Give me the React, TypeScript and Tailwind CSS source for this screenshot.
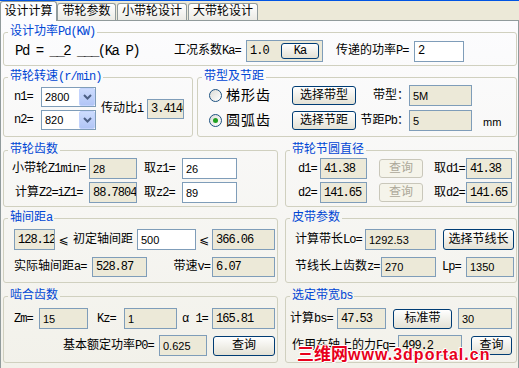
import type { ReactNode } from 'react';

const F = "font-['Liberation_Mono','Noto_Sans_CJK_SC',monospace]";
const SANS = "font-['Liberation_Sans','Noto_Sans_CJK_SC',sans-serif] text-[11px]";
const MONO = "font-['Liberation_Mono',monospace] text-[12px] tracking-[-1px]";

// SimSun draws latin half-width (6px); tighten the mono runs so labels keep their width
function T({ s }: { s: string }) {
  return (
    <>
      {s.split(/([\x20-\x7e]+)/).map((part, i) =>
        /^[\x20-\x7e]+$/.test(part) ? (
          <span key={i} className="tracking-[-1px]">
            {part}
          </span>
        ) : (
          part
        )
      )}
    </>
  );
}

function Group({ title, w, children }: { title: string; w: string; children: ReactNode }) {
  return (
    <fieldset className={`${w} shrink-0 min-w-0 rounded-[3px] border border-[#d0d0bf]`}>
      <legend className="ml-[4px] px-[2px] leading-[14px] text-[#0046d5]">
        <T s={title} />
      </legend>
      {children}
    </fieldset>
  );
}

function Box({ w, v, white, mono, h = 'h-[21px]' }: { w: string; v: string; white?: boolean; mono?: boolean; h?: string }) {
  return (
    <div
      className={`${w} ${h} shrink-0 flex items-center overflow-hidden whitespace-nowrap border border-[#7f9db9] pl-[3px] text-black ${
        white ? 'bg-white' : 'bg-[#ece9d8]'
      } ${mono ? MONO : SANS}`}
    >
      {v}
    </div>
  );
}

function Label({ w, s, className = '' }: { w: string; s: string; className?: string }) {
  return (
    <span className={`${w} shrink-0 whitespace-nowrap ${className}`}>
      <T s={s} />
    </span>
  );
}

function Btn({ w, h, children, disabled, className = '' }: { w: string; h: string; children: ReactNode; disabled?: boolean; className?: string }) {
  return (
    <button
      type="button"
      className={`${w} ${h} ${className} shrink-0 flex items-center justify-center whitespace-nowrap rounded-[3px] border ${
        disabled
          ? 'border-[#c9c7ba] bg-[#f5f4ea] text-[#aca899]'
          : 'border-[#003c74] bg-linear-to-b from-white to-[#e3e1d5] text-black'
      }`}
    >
      {children}
    </button>
  );
}

function Select({ v }: { v: string }) {
  return (
    <div className="w-[55px] h-[20px] shrink-0 flex items-center border border-[#7f9db9] bg-white">
      <span className={`flex-1 pl-[3px] ${SANS}`}>{v}</span>
      <div className="w-[16px] h-[18px] flex items-center justify-center rounded-[2px] border border-[#c3d3fd] bg-linear-to-b from-[#cddcfd] to-[#b1c5f6]">
        <svg width="9" height="6" viewBox="0 0 9 6">
          <path d="M1 1l3.5 3.5L8 1" fill="none" stroke="#4d6185" strokeWidth="2" />
        </svg>
      </div>
    </div>
  );
}

function Radio({ checked }: { checked?: boolean }) {
  return (
    <span className="w-[13px] h-[13px] shrink-0 flex items-center justify-center rounded-full border border-[#1c5180] bg-linear-to-br from-[#dcdcd7] to-white">
      {checked && <span className="w-[5px] h-[5px] rounded-full bg-[#21a121]" />}
    </span>
  );
}

const LE = "font-['DejaVu_Sans',sans-serif] text-[12px] text-center";
const TAB = 'h-[17px] flex items-center justify-center rounded-t-[3px] border border-b-0 border-[#919b9c] bg-linear-to-b from-white to-[#ecebe5]';

export default function App() {
  return (
    <div className={`w-[519px] h-[368px] overflow-hidden flex flex-col bg-[#ece9d8] border-t border-[#0054e3] text-[12px] leading-[14px] text-black ${F}`}>
      {/* tabs */}
      <div className="h-[19px] shrink-0 flex items-end">
        <div className="relative z-10 -mb-px w-[57px] h-[20px] flex items-center justify-center rounded-t-[3px] border border-b-0 border-[#919b9c] bg-[#fcfcfe]">
          设计计算
        </div>
        <div className={`w-[59px] ${TAB}`}>带轮参数</div>
        <div className={`ml-[1px] w-[70px] ${TAB}`}>小带轮设计</div>
        <div className={`ml-[1px] w-[70px] ${TAB}`}>大带轮设计</div>
      </div>

      {/* panel */}
      <div className="relative flex-1 flex flex-col pl-[2px] border-t border-x border-[#919b9c] bg-linear-to-b from-[#fcfcfe] to-[#f2f1ea]">
        <div className="mt-[4px]">
          <Group title="设计功率Pd(KW)" w="w-[514px]">
            <div className="mt-[1px] mb-[3px] h-[22px] flex items-center">
              <span className="ml-[11px] w-[159px] shrink-0 whitespace-nowrap font-['Liberation_Mono',monospace] text-[14px] tracking-[-1.5px]">
                Pd = __2 ___(Ka P)
              </span>
              <Label w="w-[72px]" s="工况系数Ka=" />
              <div className="w-[77px] h-[22px] shrink-0 flex items-center border border-[#7f9db9] bg-[#ece9d8] pl-[3px]">
                <span className={MONO}>1.0</span>
                <Btn w="w-[38px]" h="h-[16px]" className="ml-auto mr-[3px] tracking-[-1px]">
                  Ka
                </Btn>
              </div>
              <Label w="w-[78px]" className="ml-[13px]" s="传递的功率P=" />
              <Box w="w-[50px]" v="2" white mono />
            </div>
          </Group>
        </div>

        <div className="mt-[4px] flex gap-[4px]">
          <Group title="带轮转速(r/min)" w="w-[190px]">
            <div className="mt-[3px] mb-[6px] flex items-center">
              <div className="flex flex-col gap-[3px]">
                <div className="h-[20px] flex items-center">
                  <Label w="w-[27px]" className="ml-[10px]" s="n1=" />
                  <Select v="2800" />
                </div>
                <div className="h-[20px] flex items-center">
                  <Label w="w-[27px]" className="ml-[10px]" s="n2=" />
                  <Select v="820" />
                </div>
              </div>
              <Label w="w-[46px]" className="ml-[5px]" s="传动比i" />
              <Box w="w-[37px]" h="h-[20px]" v="3.4140" mono />
            </div>
          </Group>
          <Group title="带型及节距" w="w-[320px]">
            <div className="mt-[1px] mb-[5px] flex flex-col gap-[4px]">
              <div className="h-[21px] flex items-center">
                <div className="ml-[11px] w-[83px] shrink-0 flex items-center">
                  <Radio />
                  <span className="ml-[4px] text-[14px] tracking-[1px]">梯形齿</span>
                </div>
                <Btn w="w-[64px]" h="h-[19px]">选择带型</Btn>
                <Label w="w-[53px]" className="text-right" s="带型：" />
                <Box w="w-[63px]" v="5M" />
              </div>
              <div className="h-[21px] flex items-center">
                <div className="ml-[11px] w-[83px] shrink-0 flex items-center">
                  <Radio checked />
                  <span className="ml-[4px] text-[14px] tracking-[1px]">圆弧齿</span>
                </div>
                <Btn w="w-[64px]" h="h-[19px]">选择节距</Btn>
                <Label w="w-[53px]" className="text-right" s="节距Pb：" />
                <Box w="w-[63px]" v="5" />
                <span className={`ml-[11px] self-end mb-[2px] ${SANS}`}>mm</span>
              </div>
            </div>
          </Group>
        </div>

        <div className="mt-[6px] flex gap-[7px]">
          <Group title="带轮齿数" w="w-[275px]">
            <div className="mt-[1px] mb-[3px] flex flex-col gap-[3px]">
              <div className="h-[21px] flex items-center">
                <Label w="w-[77px]" className="ml-[8px]" s="小带轮Z1min=" />
                <Box w="w-[48px]" v="28" />
                <Label w="w-[38px]" className="ml-[7px]" s="取z1=" />
                <Box w="w-[55px]" v="26" white />
              </div>
              <div className="h-[21px] flex items-center">
                <Label w="w-[74px]" className="ml-[11px]" s="计算Z2=iZ1=" />
                <Box w="w-[48px]" v="88.7804" mono />
                <Label w="w-[38px]" className="ml-[7px]" s="取z2=" />
                <Box w="w-[55px]" v="89" white />
              </div>
            </div>
          </Group>
          <Group title="带轮节圆直径" w="w-[232px]">
            <div className="mt-[1px] mb-[3px] flex flex-col gap-[3px]">
              <div className="h-[21px] flex items-center">
                <Label w="w-[22px]" className="ml-[12px]" s="d1=" />
                <Box w="w-[47px]" v="41.38" mono />
                <Btn w="w-[44px]" h="h-[19px]" className="ml-[12px]" disabled>查询</Btn>
                <Label w="w-[32px]" className="ml-[11px]" s="取d1=" />
                <Box w="w-[46px]" v="41.38" mono />
              </div>
              <div className="h-[21px] flex items-center">
                <Label w="w-[22px]" className="ml-[12px]" s="d2=" />
                <Box w="w-[47px]" v="141.65" mono />
                <Btn w="w-[44px]" h="h-[19px]" className="ml-[12px]" disabled>查询</Btn>
                <Label w="w-[32px]" className="ml-[11px]" s="取d2=" />
                <Box w="w-[46px]" v="141.65" mono />
              </div>
            </div>
          </Group>
        </div>

        <div className="mt-[4px] flex gap-[7px]">
          <Group title="轴间距a" w="w-[275px]">
            <div className="mt-[4px] mb-[5px] flex flex-col gap-[7px]">
              <div className="h-[21px] flex items-center">
                <Box w="w-[41px] ml-[10px]" v="128.12" mono />
                <span className={`w-[17px] shrink-0 ${LE}`}>⩽</span>
                <Label w="w-[65px]" className="pl-[1px]" s="初定轴间距" />
                <Box w="w-[59px]" v="500" white />
                <span className={`w-[16px] shrink-0 ${LE}`}>⩽</span>
                <Box w="w-[63px]" v="366.06" mono />
              </div>
              <div className="h-[20px] flex items-center">
                <Label w="w-[78px]" className="ml-[10px]" s="实际轴间距a=" />
                <Box w="w-[55px]" h="h-[20px]" v="528.87" mono />
                <Label w="w-[65px]" className="text-right pr-[2px]" s="带速v=" />
                <Box w="w-[63px]" h="h-[20px]" v="6.07" mono />
              </div>
            </div>
          </Group>
          <Group title="皮带参数" w="w-[232px]">
            <div className="mt-[4px] mb-[5px] flex flex-col gap-[7px]">
              <div className="h-[21px] flex items-center">
                <Label w="w-[70px]" className="ml-[9px]" s="计算带长Lo=" />
                <Box w="w-[71px]" v="1292.53" />
                <Btn w="w-[71px]" h="h-[21px]" className="ml-[7px]">选择节线长</Btn>
              </div>
              <div className="h-[20px] flex items-center">
                <Label w="w-[86px]" className="ml-[9px]" s="节线长上齿数z=" />
                <Box w="w-[55px]" h="h-[20px]" v="270" />
                <Label w="w-[24px]" className="ml-[6px]" s="Lp=" />
                <Box w="w-[48px]" h="h-[20px]" v="1350" />
              </div>
            </div>
          </Group>
        </div>

        <div className="mt-[6px] flex gap-[7px]">
          <Group title="啮合齿数" w="w-[275px]">
            <div className="mt-[5px] mb-[6px] flex flex-col gap-[6px]">
              <div className="h-[21px] flex items-center">
                <Label w="w-[25px]" className="ml-[10px]" s="Zm=" />
                <Box w="w-[49px]" v="15" />
                <Label w="w-[36px]" className="pl-[9px]" s="Kz=" />
                <Box w="w-[53px]" v="1" />
                <Label w="w-[35px]" className="pl-[5px]" s="α 1=" />
                <Box w="w-[63px]" v="165.81" mono />
              </div>
              <div className="h-[21px] flex items-center">
                <Label w="w-[96px]" className="ml-[59px]" s="基本额定功率P0=" />
                <Box w="w-[48px]" v="0.625" />
                <Btn w="w-[62px]" h="h-[20px]" className="ml-[6px]">查询</Btn>
              </div>
            </div>
          </Group>
          <Group title="选定带宽bs" w="w-[232px]">
            <div className="mt-[5px] mb-[6px] flex flex-col gap-[6px]">
              <div className="h-[21px] flex items-center">
                <Label w="w-[47px]" className="ml-[4px]" s="计算bs=" />
                <Box w="w-[49px]" v="47.53" mono />
                <Btn w="w-[59px]" h="h-[20px]" className="ml-[7px]">标准带</Btn>
                <Box w="w-[54px] ml-[6px]" v="30" />
              </div>
              <div className="h-[21px] flex items-center">
                <Label w="w-[106px]" className="ml-[6px]" s="作用在轴上的力Fq=" />
                <Box w="w-[64px]" v="499.2" mono />
                <Btn w="w-[41px]" h="h-[19px]" className="ml-[9px]">查询</Btn>
              </div>
            </div>
          </Group>
        </div>

        {/* watermark */}
        <div className="absolute left-[296px] top-[325px] whitespace-nowrap font-['Liberation_Sans','Noto_Sans_CJK_SC',sans-serif] text-[16px] font-bold leading-[18px] tracking-[1px] text-[#e8001c] [text-shadow:-1px_0_#fff,1px_0_#fff,0_-1px_#fff,0_1px_#fff,1px_1px_#fff,-1px_-1px_#fff]">
          <span className="text-[17px] tracking-[0px]">三维网</span>www.3dportal.cn
        </div>
      </div>
    </div>
  );
}
